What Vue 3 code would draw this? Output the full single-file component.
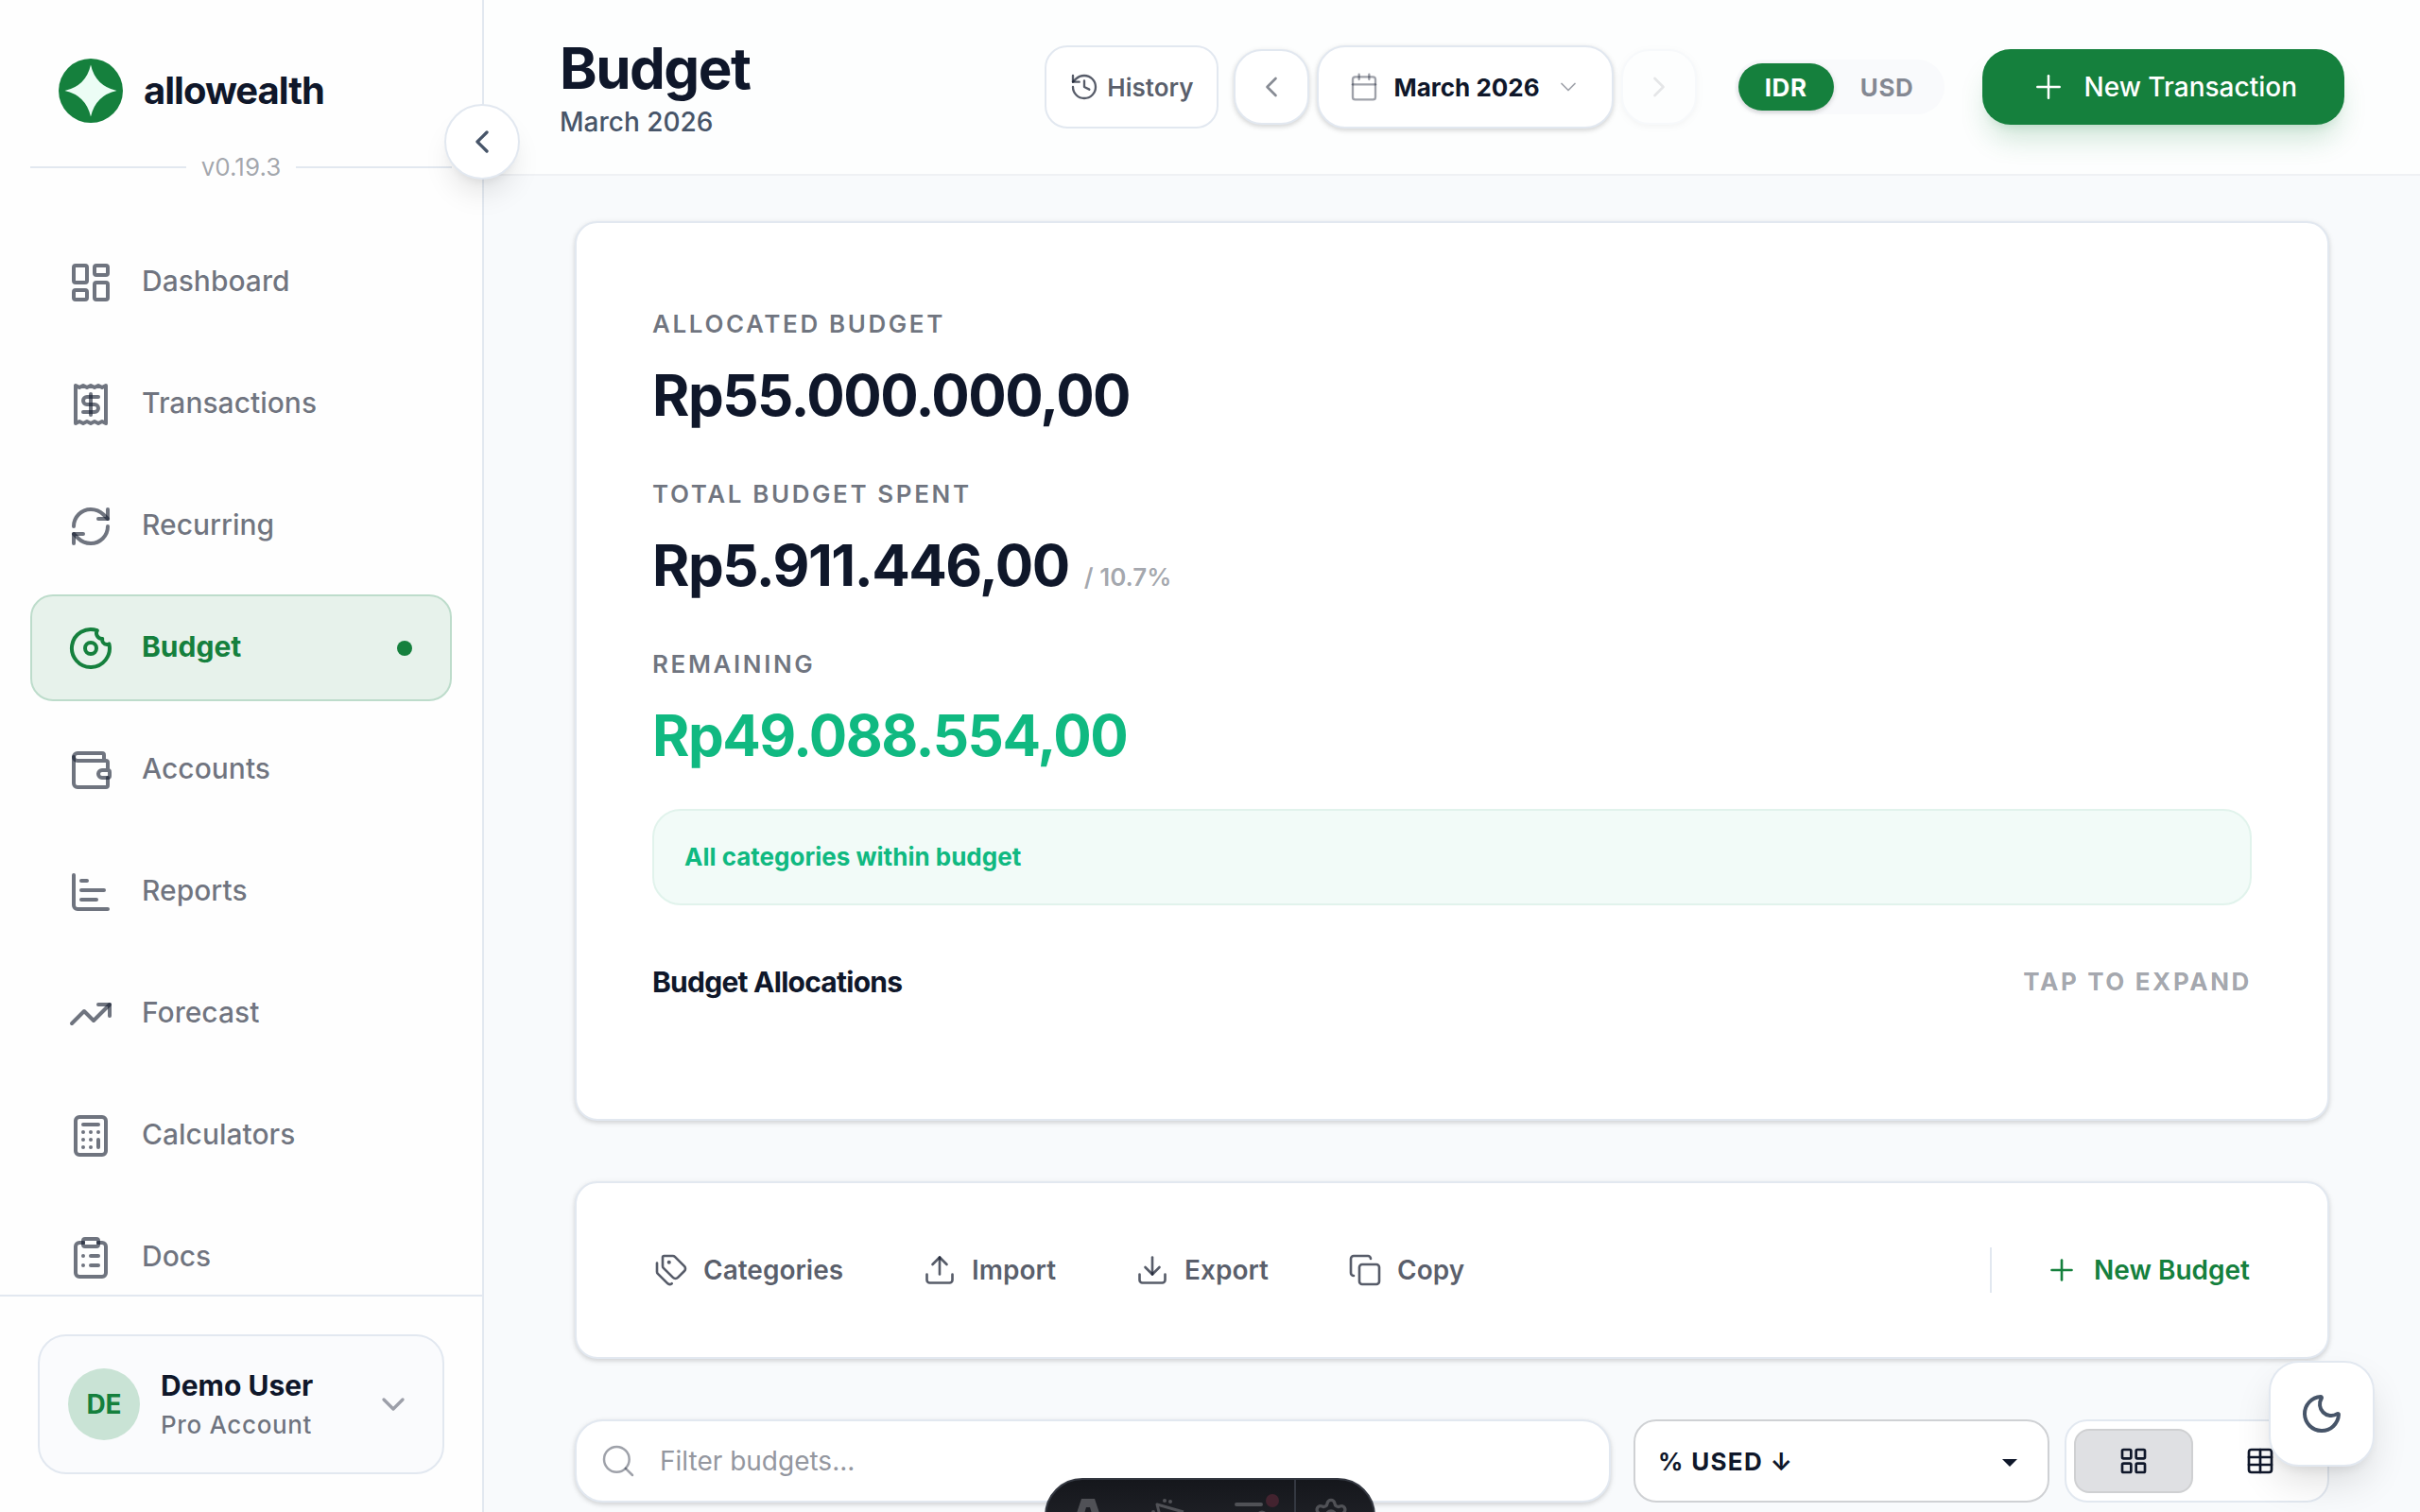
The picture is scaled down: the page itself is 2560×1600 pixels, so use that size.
<template>
  <div class="app">
    <aside class="sidebar">
      <div class="brand">
        <svg class="logo" viewBox="0 0 68 68" aria-hidden="true">
          <circle cx="34" cy="34" r="34" fill="#15803d" />
          <path d="M34 6.500Q39 29 61.500 34Q39 39 34 61.500Q29 39 6.500 34Q29 29 34 6.500Z" fill="#ecfdf5" />
        </svg>
        <span class="brand-name">allowealth</span>
      </div>
      <div class="version">v0.19.3</div>

      <nav class="nav">
        <a
          v-for="item in menu"
          :key="item.label"
          href="#"
          class="nav-item"
          :class="{ active: item.label === current }"
          @click.prevent="current = item.label"
        >
          <Icon :name="item.icon" :size="48" :stroke="2" />
          <span class="nav-label">{{ item.label }}</span>
          <span v-if="item.label === current" class="nav-dot"></span>
        </a>
      </nav>

      <div class="account">
        <button type="button" class="user">
          <span class="avatar">DE</span>
          <span class="user-text">
            <span class="user-name">Demo User</span>
            <span class="user-plan">Pro Account</span>
          </span>
          <Icon class="faded" name="chevronDown" :size="40" :stroke="2" />
        </button>
      </div>

      <button type="button" class="collapse" aria-label="Collapse sidebar">
        <Icon name="chevronLeft" :size="40" :stroke="2" />
      </button>
    </aside>

    <div class="page">
      <header class="topbar">
        <div class="heading">
          <h1>Budget</h1>
          <p>March 2026</p>
        </div>
        <button type="button" class="history">
          <Icon name="history" :size="32" :stroke="1.75" />
          History
        </button>
        <div class="months">
          <button type="button" class="step" aria-label="Previous month">
            <Icon name="chevronLeft" :size="36" :stroke="1.75" />
          </button>
          <button type="button" class="month">
            <Icon class="faded" name="calendar" :size="32" :stroke="1.75" />
            <span>March 2026</span>
            <Icon class="faded" name="chevronDown" :size="28" />
          </button>
          <button type="button" class="step" aria-label="Next month" disabled>
            <Icon name="chevronRight" :size="36" :stroke="1.75" />
          </button>
        </div>
        <div class="currency">
          <button
            v-for="c in ['IDR', 'USD']"
            :key="c"
            type="button"
            :class="{ on: c === currency }"
            @click="currency = c"
          >{{ c }}</button>
        </div>
        <button type="button" class="primary">
          <Icon name="plus" :size="40" />
          New Transaction
        </button>
      </header>

      <main class="content">
        <section class="card summary">
          <div v-for="t in totals" :key="t.label" class="total">
            <h2>{{ t.label }}</h2>
            <p :class="{ positive: t.positive }">
              {{ t.amount }}<small v-if="t.note">{{ t.note }}</small>
            </p>
          </div>
          <div class="notice">All categories within budget</div>
          <button type="button" class="allocations">
            <span class="allocations-title">Budget Allocations</span>
            <span class="allocations-hint">TAP TO EXPAND</span>
          </button>
        </section>

        <section class="card toolbar">
          <button v-for="a in actions" :key="a.label" type="button" class="action">
            <Icon :name="a.icon" :size="36" :stroke="1.75" />
            {{ a.label }}
          </button>
          <span class="divider"></span>
          <button type="button" class="action add">
            <Icon name="plus" :size="36" :stroke="1.75" />
            New Budget
          </button>
        </section>

        <div class="filters">
          <label class="search">
            <Icon class="faded" name="search" :size="40" />
            <input v-model="filter" type="text" placeholder="Filter budgets..." aria-label="Filter budgets" />
          </label>
          <div class="sort">
            <select v-model="sort" aria-label="Sort budgets">
              <option value="used">% USED ↓</option>
            </select>
            <svg class="caret" viewBox="0 0 16 8" aria-hidden="true"><path d="M0 0h16L8 8z" /></svg>
          </div>
          <div class="views">
            <button type="button" :class="{ on: view === 'grid' }" aria-label="Grid view" @click="view = 'grid'">
              <Icon name="grid" :size="32" :stroke="2" />
            </button>
            <button type="button" :class="{ on: view === 'table' }" aria-label="Table view" @click="view = 'table'">
              <Icon name="table" :size="32" :stroke="2" />
            </button>
          </div>
        </div>
      </main>
    </div>

    <button type="button" class="theme" aria-label="Toggle dark mode">
      <Icon name="moon" :size="48" :stroke="2" />
    </button>

    <div class="devbar">
      <button type="button" aria-label="Menu">
        <svg viewBox="0 0 36 36"><path d="M11 0h14l10 30-10-4-5-17h-4l-5 17-10 4z" fill="#505156" /></svg>
      </button>
      <button type="button" aria-label="Inspect">
        <svg viewBox="0 0 36 36" fill="none" stroke="#505156" stroke-width="3" stroke-linejoin="round">
          <path d="M32 14L4 6l7 28 6-10" />
          <g fill="#505156" stroke="none">
            <circle cx="12" cy="2" r="2" />
            <circle cx="18" cy="3" r="2" />
            <circle cx="0" cy="14" r="2" />
          </g>
        </svg>
      </button>
      <button type="button" aria-label="Audit">
        <svg viewBox="0 0 36 36" stroke="#505156" stroke-width="4" stroke-linecap="round">
          <path d="M1 6h26M1 18h18M1 30h14" />
          <circle cx="28" cy="18" r="4" fill="none" stroke-width="3" />
          <circle cx="39" cy="2" r="7" fill="#43232f" stroke="none" />
        </svg>
      </button>
      <button type="button" class="settings" aria-label="Settings">
        <Icon name="gear" :size="40" :stroke="2" />
      </button>
    </div>
  </div>
</template>

<script setup>
import { h, ref } from 'vue'

const current = ref('Budget')
const currency = ref('IDR')
const filter = ref('')
const sort = ref('used')
const view = ref('grid')

const menu = [
  { label: 'Dashboard', icon: 'dashboard' },
  { label: 'Transactions', icon: 'receipt' },
  { label: 'Recurring', icon: 'refresh' },
  { label: 'Budget', icon: 'donut' },
  { label: 'Accounts', icon: 'wallet' },
  { label: 'Reports', icon: 'chart' },
  { label: 'Forecast', icon: 'trending' },
  { label: 'Calculators', icon: 'calculator' },
  { label: 'Docs', icon: 'clipboard' },
]

const totals = [
  { label: 'ALLOCATED BUDGET', amount: 'Rp55.000.000,00' },
  { label: 'TOTAL BUDGET SPENT', amount: 'Rp5.911.446,00', note: '/ 10.7%' },
  { label: 'REMAINING', amount: 'Rp49.088.554,00', positive: true },
]

const actions = [
  { label: 'Categories', icon: 'tags' },
  { label: 'Import', icon: 'upload' },
  { label: 'Export', icon: 'download' },
  { label: 'Copy', icon: 'copy' },
]

const box = (x, y, width, height, rx) => ['rect', { x, y, width, height, rx }]
const dot = (cx, cy, r) => ['circle', { cx, cy, r }]

// strings are path data, arrays are [tag, attributes]
const icons = {
  dashboard: [box(3, 3, 7, 9, 1), box(14, 3, 7, 5, 1), box(14, 12, 7, 9, 1), box(3, 16, 7, 5, 1)],
  receipt: [
    'M4 2v20l2-1 2 1 2-1 2 1 2-1 2 1 2-1 2 1V2l-2 1-2-1-2 1-2-1-2 1-2-1-2 1Z',
    'M16 8h-6a2 2 0 1 0 0 4h4a2 2 0 1 1 0 4H8',
    'M12 17.500v-11',
  ],
  refresh: [
    'M3 12a9 9 0 0 1 9-9 9.750 9.750 0 0 1 6.740 2.740L21 8',
    'M21 3v5h-5',
    'M21 12a9 9 0 0 1-9 9 9.750 9.750 0 0 1-6.740-2.740L3 16',
    'M8 16H3v5',
  ],
  donut: [
    'M20.500 10a2.500 2.500 0 0 1-2.400-3H18a2.950 2.950 0 0 1-2.600-4.400 10 10 0 1 0 6.300 7.100c-.3.2-.8.3-1.200.3',
    dot(12, 12, 3),
  ],
  wallet: [
    'M19 7V4a1 1 0 0 0-1-1H5a2 2 0 0 0 0 4h15a1 1 0 0 1 1 1v4h-3a2 2 0 0 0 0 4h3a1 1 0 0 0 1-1v-2a1 1 0 0 0-1-1',
    'M3 5v14a2 2 0 0 0 2 2h15a1 1 0 0 0 1-1v-4',
  ],
  chart: ['M3 3v16a2 2 0 0 0 2 2h16', 'M7 16h8', 'M7 11h12', 'M7 6h3'],
  trending: ['M22 7l-8.500 8.500-5-5L2 17', 'M16 7h6v6'],
  calculator: [
    box(4, 2, 16, 20, 2),
    'M8 6h8', 'M16 14v4', 'M16 10h.01', 'M12 10h.01', 'M8 10h.01',
    'M12 14h.01', 'M8 14h.01', 'M12 18h.01', 'M8 18h.01',
  ],
  clipboard: [
    box(8, 2, 8, 4, 1),
    'M16 4h2a2 2 0 0 1 2 2v14a2 2 0 0 1-2 2H6a2 2 0 0 1-2-2V6a2 2 0 0 1 2-2h2',
    'M12 11h4', 'M12 16h4', 'M8 11h.01', 'M8 16h.01',
  ],
  chevronLeft: ['m15 18-6-6 6-6'],
  chevronRight: ['m9 18 6-6-6-6'],
  chevronDown: ['m6 9 6 6 6-6'],
  history: ['M3 12a9 9 0 1 0 9-9 9.750 9.750 0 0 0-6.740 2.740L3 8', 'M3 3v5h5', 'M12 7v5l4 2'],
  calendar: ['M8 2v4', 'M16 2v4', box(3, 4, 18, 18, 2), 'M3 10h18'],
  plus: ['M5 12h14', 'M12 5v14'],
  tags: [
    'M13.172 2a2 2 0 0 1 1.414.586l6.710 6.710a2.400 2.400 0 0 1 0 3.408l-4.592 4.592a2.400 2.400 0 0 1-3.408 0l-6.710-6.710A2 2 0 0 1 6 9.172V3a1 1 0 0 1 1-1z',
    'M2 7v6.172a2 2 0 0 0 .586 1.414l6.710 6.710a2.400 2.400 0 0 0 3.191.193',
    ['circle', { cx: 10.5, cy: 6.5, r: 0.5, fill: 'currentColor' }],
  ],
  upload: ['M12 3v12', 'm17 8-5-5-5 5', 'M21 15v4a2 2 0 0 1-2 2H5a2 2 0 0 1-2-2v-4'],
  download: ['M12 15V3', 'M21 15v4a2 2 0 0 1-2 2H5a2 2 0 0 1-2-2v-4', 'm7 10 5 5 5-5'],
  copy: [box(8, 8, 14, 14, 2), 'M4 16c-1.100 0-2-.9-2-2V4c0-1.100.9-2 2-2h10c1.100 0 2 .9 2 2'],
  search: [dot(11, 11, 8), 'm21 21-4.340-4.340'],
  grid: [box(3, 3, 7, 7, 1), box(14, 3, 7, 7, 1), box(14, 14, 7, 7, 1), box(3, 14, 7, 7, 1)],
  table: ['M12 3v18', box(3, 3, 18, 18, 2), 'M3 9h18', 'M3 15h18'],
  moon: ['M20.985 12.486a9 9 0 1 1-9.473-9.472c.405-.022.617.46.402.803a6 6 0 0 0 8.268 8.268c.344-.215.825-.004.803.401'],
  gear: [
    'M9.671 4.136a2.340 2.340 0 0 1 4.659 0 2.340 2.340 0 0 0 3.319 1.915 2.340 2.340 0 0 1 2.330 4.033 2.340 2.340 0 0 0 0 3.831 2.340 2.340 0 0 1-2.330 4.033 2.340 2.340 0 0 0-3.319 1.915 2.340 2.340 0 0 1-4.659 0 2.340 2.340 0 0 0-3.320-1.915 2.340 2.340 0 0 1-2.330-4.033 2.340 2.340 0 0 0 0-3.831A2.340 2.340 0 0 1 6.350 6.051a2.340 2.340 0 0 0 3.319-1.915',
    dot(12, 12, 3),
  ],
}

const Icon = ({ name, size, stroke = 1.5 }) =>
  h(
    'svg',
    {
      width: size,
      height: size,
      viewBox: '0 0 24 24',
      fill: 'none',
      stroke: 'currentColor',
      'stroke-width': stroke,
      'stroke-linecap': 'round',
      'stroke-linejoin': 'round',
      'aria-hidden': 'true',
    },
    icons[name].map((s) => (typeof s === 'string' ? h('path', { d: s }) : h(s[0], s[1])))
  )
Icon.props = ['name', 'size', 'stroke']
</script>

<style>
body {
  margin: 0;
  overflow: hidden;
}
</style>

<style scoped>
.app {
  --ink: #0f172a;
  --line: #e2e8f0;
  --green: #15803d;
  --mint: #10b981;
  --ink-70: rgba(15, 23, 42, 0.7);
  --ink-60: rgba(15, 23, 42, 0.6);
  --ink-40: rgba(15, 23, 42, 0.4);
  --shadow-sm: 0 2px 6px rgba(0, 0, 0, 0.1), 0 2px 4px rgba(0, 0, 0, 0.08);
  display: flex;
  height: 100vh;
  overflow: hidden;
  background: #f8fafc;
  color: var(--ink);
  font-family: Inter, "Liberation Sans", sans-serif;
  font-size: 28px;
}
.app *,
.app :deep(svg) {
  box-sizing: border-box;
}
svg {
  flex: none;
}
button {
  margin: 0;
  padding: 0;
  border: 0;
  background: none;
  color: inherit;
  font: inherit;
  cursor: pointer;
}
.faded {
  color: var(--ink-40);
}

/* sidebar */
.sidebar {
  position: relative;
  z-index: 2;
  display: flex;
  flex: none;
  flex-direction: column;
  width: 512px;
  border-right: 2px solid var(--line);
  background: #fefefe;
}
.brand {
  display: flex;
  align-items: center;
  gap: 22px;
  padding: 62px 62px 0;
}
.logo {
  width: 68px;
  height: 68px;
}
.brand-name {
  font-size: 40px;
  font-weight: 700;
  line-height: 60px;
  letter-spacing: -0.025em;
}
.version {
  display: flex;
  align-items: center;
  gap: 16px;
  margin: 30px 32px 0;
  color: var(--ink-40);
  font-size: 26px;
  line-height: 34px;
}
.version::before,
.version::after {
  content: "";
  flex: 1;
  height: 2px;
  background: var(--line);
}
.nav {
  display: flex;
  flex: 1;
  flex-direction: column;
  gap: 16px;
  min-height: 0;
  overflow: hidden;
  padding: 48px 32px 0;
}
.nav-item {
  display: flex;
  flex: none;
  align-items: center;
  gap: 30px;
  height: 113px;
  padding: 0 40px 0 38px;
  border: 2px solid transparent;
  border-radius: 24px;
  color: var(--ink-60);
  font-size: 30px;
  font-weight: 500;
  line-height: 44px;
  text-decoration: none;
}
.nav-label {
  flex: 1;
  padding-bottom: 4px;
}
.nav-item.active {
  border-color: #bddccb;
  background: #e7f2eb;
  color: var(--green);
  font-weight: 700;
}
.nav-dot {
  width: 16px;
  height: 16px;
  border-radius: 50%;
  background: var(--green);
}
.account {
  padding: 40px;
  border-top: 2px solid var(--line);
}
.user {
  display: flex;
  align-items: center;
  gap: 22px;
  width: 100%;
  height: 148px;
  padding: 0 32px 0 30px;
  border: 2px solid var(--line);
  border-radius: 30px;
  background: #fafbfd;
  text-align: left;
}
.avatar {
  flex: none;
  width: 76px;
  border-radius: 50%;
  background: #c9e3d5;
  color: var(--green);
  font-size: 28px;
  font-weight: 700;
  line-height: 76px;
  text-align: center;
}
.user-text {
  display: flex;
  flex: 1;
  flex-direction: column;
}
.user-name {
  font-size: 30px;
  font-weight: 700;
  line-height: 44px;
}
.user-plan {
  color: var(--ink-60);
  font-size: 26px;
  font-weight: 500;
  line-height: 40px;
  letter-spacing: 0.025em;
}
.collapse {
  position: absolute;
  top: 110px;
  right: -40px;
  display: grid;
  place-items: center;
  width: 80px;
  height: 80px;
  border: 2px solid var(--line);
  border-radius: 50%;
  background: #fff;
  box-shadow: 0 20px 30px -6px rgba(0, 0, 0, 0.1), 0 8px 12px -8px rgba(0, 0, 0, 0.1);
  color: #475569;
}

/* top bar */
.page {
  display: flex;
  flex: 1;
  flex-direction: column;
  min-width: 0;
}
.topbar {
  display: flex;
  flex: none;
  align-items: center;
  height: 186px;
  padding: 0 80px;
  border-bottom: 2px solid #eff1f4;
  background: #fdfefe;
}
.heading {
  flex: 1;
  padding-bottom: 2px;
}
.heading h1 {
  margin: 0;
  font-size: 60px;
  font-weight: 700;
  line-height: 75px;
  letter-spacing: -0.025em;
}
.heading p {
  margin: 0;
  color: #475569;
  font-size: 28px;
  font-weight: 500;
  line-height: 38px;
}
.history {
  display: flex;
  align-items: center;
  gap: 8px;
  height: 88px;
  margin-right: 16px;
  padding: 0 24px;
  border: 2px solid var(--line);
  border-radius: 24px;
  background: #fff;
  color: var(--ink-70);
  font-size: 26px;
  font-weight: 600;
}
.months {
  display: flex;
  align-items: center;
  gap: 8px;
  margin-right: 40px;
}
.step {
  display: grid;
  place-items: center;
  width: 80px;
  height: 80px;
  border: 2px solid var(--line);
  border-radius: 30px;
  background: #fff;
  box-shadow: var(--shadow-sm);
  color: rgba(15, 23, 42, 0.5);
}
.step:disabled {
  opacity: 0.2;
}
.month {
  display: flex;
  align-items: center;
  gap: 16px;
  height: 88px;
  padding: 0 32px;
  border: 2px solid var(--line);
  border-radius: 30px;
  background: #fff;
  box-shadow: var(--shadow-sm);
  font-size: 26px;
  font-weight: 700;
}
.currency {
  display: flex;
  margin-right: 40px;
  padding: 4px;
  border-radius: 29px;
  background: #f9fafc;
}
.currency button {
  height: 50px;
  padding: 0 28px;
  border-radius: 25px;
  color: rgba(15, 23, 42, 0.5);
  font-size: 26px;
  font-weight: 700;
  letter-spacing: 0.025em;
}
.currency button.on {
  background: var(--green);
  box-shadow: var(--shadow-sm);
  color: #fff;
}
.primary {
  display: flex;
  align-items: center;
  gap: 18px;
  height: 80px;
  padding: 0 50px;
  border-radius: 30px;
  background: var(--green);
  box-shadow: 0 20px 30px -6px rgba(21, 128, 61, 0.2), 0 8px 12px -8px rgba(21, 128, 61, 0.2);
  color: #fff;
  font-weight: 500;
}

/* content */
.content {
  display: flex;
  flex-direction: column;
  gap: 64px;
  padding: 48px 96px;
}
.card {
  border: 2px solid var(--line);
  border-radius: 24px;
  background: #fff;
  box-shadow: var(--shadow-sm);
}
.summary {
  padding: 80px 80px 124px;
}
.total {
  margin-bottom: 34px;
}
.total h2 {
  margin: 0;
  padding-top: 8px;
  color: var(--ink-60);
  font-size: 26px;
  font-weight: 600;
  line-height: 38px;
  letter-spacing: 0.1em;
}
.total p {
  margin: 12px 0 0;
  font-size: 60px;
  font-weight: 700;
  line-height: 88px;
  letter-spacing: -0.025em;
}
.total p.positive {
  color: var(--mint);
}
.total small {
  margin-left: 16px;
  color: var(--ink-40);
  font-size: 26px;
  font-weight: 600;
  line-height: 26px;
  letter-spacing: 0;
}
.notice {
  padding: 30px 32px;
  border: 2px solid #e1f3ec;
  border-radius: 30px;
  background: #f2fbf8;
  color: var(--mint);
  font-size: 26px;
  font-weight: 700;
  line-height: 38px;
}
.allocations {
  display: flex;
  align-items: center;
  justify-content: space-between;
  width: 100%;
  margin-top: 60px;
  line-height: 42px;
}
.allocations-title {
  font-size: 30px;
  font-weight: 700;
  letter-spacing: -0.025em;
}
.allocations-hint {
  color: var(--ink-40);
  font-size: 26px;
  font-weight: 700;
  letter-spacing: 0.1em;
}
.toolbar {
  display: flex;
  align-items: center;
  gap: 84px;
  height: 188px;
  padding: 0 82px;
}
.action {
  display: flex;
  align-items: center;
  gap: 16px;
  color: var(--ink-70);
  font-weight: 600;
}
.divider {
  width: 2px;
  height: 48px;
  margin: 0 -28px 0 auto;
  background: var(--line);
}
.action.add {
  color: var(--green);
}

/* filters */
.filters {
  display: flex;
  height: 88px;
}
.search {
  display: flex;
  flex: 1;
  align-items: center;
  gap: 24px;
  margin-right: 24px;
  padding: 0 24px;
  border: 2px solid var(--line);
  border-radius: 30px;
  background: #fff;
  box-shadow: var(--shadow-sm);
}
.search input {
  flex: 1;
  min-width: 0;
  padding: 0;
  border: 0;
  outline: 0;
  background: none;
  color: var(--ink);
  font: inherit;
}
.search input::placeholder {
  color: #94979f;
  opacity: 1;
}
.sort {
  position: relative;
  width: 440px;
  margin-right: 16px;
}
.sort select {
  width: 100%;
  height: 100%;
  padding: 0 24px;
  border: 2px solid #cfd1d4;
  border-radius: 24px;
  background: #fff;
  color: var(--ink);
  font: inherit;
  font-size: 26px;
  font-weight: 700;
  letter-spacing: 0.05em;
  appearance: none;
}
.caret {
  position: absolute;
  top: 42px;
  right: 34px;
  width: 16px;
  height: 8px;
  fill: var(--ink);
  pointer-events: none;
}
.views {
  display: flex;
  gap: 8px;
  width: 280px;
  padding: 8px;
  border: 2px solid var(--line);
  border-radius: 24px;
  background: #fff;
}
.views button {
  display: grid;
  flex: 1;
  place-items: center;
  border: 2px solid transparent;
  border-radius: 16px;
}
.views button.on {
  border-color: #cfd0d2;
  background: #dfe0e3;
}

/* floating controls */
.theme {
  position: fixed;
  right: 48px;
  bottom: 48px;
  z-index: 3;
  display: grid;
  place-items: center;
  width: 112px;
  height: 112px;
  border: 2px solid var(--line);
  border-radius: 32px;
  background: #fff;
  box-shadow: 0 20px 40px -4px rgba(0, 0, 0, 0.12), 0 8px 16px -8px rgba(0, 0, 0, 0.12);
  color: #475569;
}
.devbar {
  position: fixed;
  bottom: -44px;
  left: 50%;
  z-index: 3;
  display: flex;
  width: 350px;
  height: 80px;
  overflow: hidden;
  border: 2px solid #343841;
  border-radius: 40px;
  background: linear-gradient(#15171c, #26272d);
  transform: translateX(-50%);
  color: #505156;
}
.devbar button {
  display: grid;
  flex: 1;
  place-items: center;
  color: inherit;
}
.devbar button > svg:not([width]) {
  width: 36px;
  height: 36px;
  overflow: visible;
}
.devbar .settings {
  flex: none;
  width: 84px;
  padding-right: 8px;
  border-left: 2px solid #343841;
}
</style>
